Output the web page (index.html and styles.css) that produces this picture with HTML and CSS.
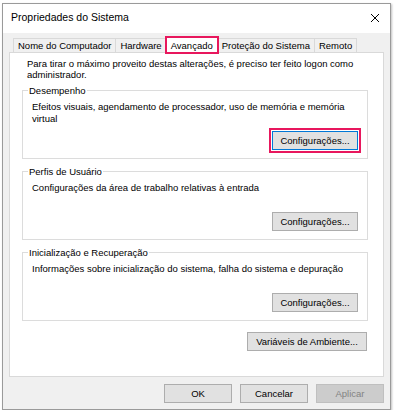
FILE: index.html
```html
<!DOCTYPE html>
<html lang="pt">
<head>
<meta charset="utf-8">
<title>Propriedades do Sistema</title>
<link rel="stylesheet" href="styles.css">
</head>
<body>
<div class="window">
  <div class="titlebar">
    <span class="title">Propriedades do Sistema</span>
    <svg class="close" width="10" height="10" viewBox="0 0 10 10"><path d="M1 1L9 9M9 1L1 9" stroke="#000" stroke-width="1" fill="none"/></svg>
  </div>
  <div class="content">
    <div class="tabs">
      <div class="tab">Nome do Computador</div>
      <div class="tab">Hardware</div>
      <div class="tab active">Avançado</div>
      <div class="tab">Proteção do Sistema</div>
      <div class="tab">Remoto</div>
    </div>
    <div class="panel">
      <p class="intro">Para tirar o máximo proveito destas alterações, é preciso ter feito logon como administrador.</p>
      <fieldset class="group">
        <legend>Desempenho</legend>
        <p class="desc">Efeitos visuais, agendamento de processador, uso de memória e memória virtual</p>
        <div class="row"><button class="btn focused">Configurações...</button></div>
      </fieldset>
      <fieldset class="group">
        <legend>Perfis de Usuário</legend>
        <p class="desc">Configurações da área de trabalho relativas à entrada</p>
        <div class="row"><button class="btn">Configurações...</button></div>
      </fieldset>
      <fieldset class="group">
        <legend>Inicialização e Recuperação</legend>
        <p class="desc">Informações sobre inicialização do sistema, falha do sistema e depuração</p>
        <div class="row"><button class="btn">Configurações...</button></div>
      </fieldset>
      <div class="row env"><button class="btn wide">Variáveis de Ambiente...</button></div>
    </div>
    <div class="footer">
      <button class="btn std">OK</button>
      <button class="btn std">Cancelar</button>
      <button class="btn std disabled">Aplicar</button>
    </div>
  </div>
</div>
</body>
</html>
```
FILE: styles.css
```css
* { box-sizing: border-box; }
body {
  margin: 0;
  background: #fff;
  font-family: "Liberation Sans", Arial, sans-serif;
  font-size: 9.5px;
  color: #000;
}
.window {
  margin: 3px 0 0 2px;
  width: 389px;
  height: 407px;
  border: 1px solid #9a9a9a;
  box-shadow: 1px 1px 2px rgba(0,0,0,0.25);
  background: #f0f0f0;
  display: flex;
  flex-direction: column;
}
.titlebar {
  height: 29px;
  background: #fff;
  display: flex;
  align-items: center;
  justify-content: space-between;
  padding: 0 10px 3px 8px;
}
.title { font-size: 10.5px; }
.close { display: block; margin-top: 2px; }
.content {
  flex: 1;
  display: flex;
  flex-direction: column;
  padding: 0 6px;
}
.tabs {
  display: flex;
  align-items: flex-end;
  height: 19px;
  padding-left: 4px;
  position: relative;
  z-index: 1;
}
.tab {
  height: 14px;
  line-height: 13px;
  padding: 0 4px;
  border: 1px solid #d9d9d9;
  border-bottom: none;
  border-left: none;
  background: #f0f0f0;
  white-space: nowrap;
}
.tab:first-child { border-left: 1px solid #d9d9d9; }
.tab.active {
  height: 18px;
  line-height: 15px;
  margin: 0 -1px -2px -2px;
  padding: 0 4px 2px;
  background: #fff;
  border: 2px solid #e8175d;
  position: relative;
  z-index: 2;
}
.panel {
  height: 325px;
  background: #fff;
  border: 1px solid #d9d9d9;
  padding: 6px 15px 0 12px;
}
p { margin: 0; }
.intro {
  line-height: 10.5px;
  margin-left: 5px;
  margin-right: 10px;
}
.group {
  margin: 5px 0 0 0;
  border: 1px solid #dcdcdc;
  padding: 5px 9px 8px 9px;
}
.group + .group { margin-top: 7px; }
legend {
  margin-left: -4px;
  padding: 0 1px;
  line-height: 11px;
}
.desc {
  line-height: 11.5px;
  min-height: 23px;
}
.row {
  display: flex;
  justify-content: flex-end;
  margin-top: 7px;
}
.btn {
  font-family: "Liberation Sans", Arial, sans-serif;
  font-size: 9.5px;
  color: #000;
  height: 19px;
  padding: 0;
  background: #e1e1e1;
  border: 1px solid #adadad;
  border-radius: 0;
}
.row .btn { width: 86px; }
.btn.focused {
  border: 1px solid #0078d7;
  outline: 2px solid #e8175d;
  outline-offset: 1px;
}
.env { margin-top: 11px; margin-right: 1px; }
.btn.wide { width: 120px; }
.footer {
  display: flex;
  justify-content: flex-end;
  gap: 8px;
  padding-top: 7px;
}
.btn.std { width: 68px; }
.btn.disabled {
  background: #cccccc;
  border-color: #bfbfbf;
  color: #838383;
}
```
